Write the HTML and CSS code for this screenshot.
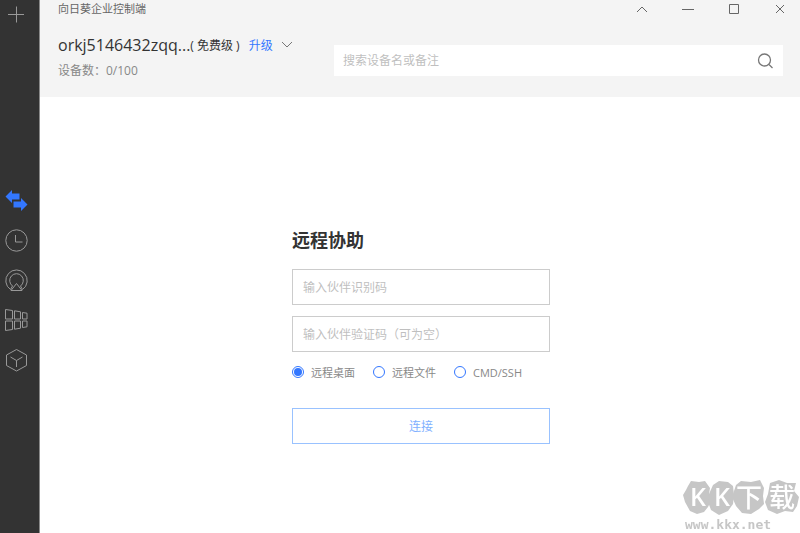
FILE: index.html
```html
<!DOCTYPE html>
<html lang="zh-CN">
<head>
    <meta charset="UTF-8">
    <title>向日葵企业控制端</title>
    <meta name="viewport" content="width=device-width, initial-scale=1.0">
    <link rel="stylesheet" href="styles.css">
</head>
<body>

    <!-- Sidebar -->
    <nav class="sidebar">
        <button class="icon-button" type="button" aria-label="添加">
            <svg width="24" height="24" viewBox="0 0 24 24"><path d="M4 12.500h16M12.500 4.500v16"/></svg>
        </button>
        <div class="sidebar-menu">
            <button class="icon-button active" type="button" aria-label="远程协助">
                <svg width="24" height="24" viewBox="0 0 24 24"><path d="M1.500 8.500L8 2v3.500h7.500v6H8V15z"/><path d="M23.500 16.500L17 10v3.500H9.500v6H17V23z"/></svg>
            </button>
            <button class="icon-button" type="button" aria-label="历史记录">
                <svg width="24" height="24" viewBox="0 0 24 24"><circle cx="12.500" cy="12.500" r="10.700"/><path d="M11.500 7v7h7"/></svg>
            </button>
            <button class="icon-button" type="button" aria-label="投屏">
                <svg width="24" height="24" viewBox="0 0 24 24"><path d="M6.500 21.500a10.700 10.700 0 1 1 12 0"/><path d="M8.500 18a6.800 6.800 0 1 1 8 0"/><path d="M6.500 21.500l2-3.500M18.500 21.500l-2-3.500"/><path d="M12.500 15.500L7 22.500h11z"/></svg>
            </button>
            <button class="icon-button" type="button" aria-label="设备墙">
                <svg width="24" height="24" viewBox="0 0 24 24"><path d="M1.500 1.500l7 1v8.500h-7zM10.500 2.800l6 1V11h-6zM18.500 4.500l4.500.7V11h-4.500zM1.500 13h7v8.500l-7 1zM10.500 13h6v7.200l-6 1zM18.500 13H23v5.800l-4.500.7z"/></svg>
            </button>
            <button class="icon-button" type="button" aria-label="应用">
                <svg width="24" height="24" viewBox="0 0 24 24"><path d="M12.500 1.500l10 5.500v10.500l-10 5.500-10-5.500V7z"/><path d="M6.500 9l6 3.500 6-3.500M12.500 12.500v6.500"/></svg>
            </button>
        </div>
    </nav>

    <div class="window">
        <header class="header">
            <div class="title-bar">
                <span class="title">向日葵企业控制端</span>
                <div class="window-controls">
                    <button type="button" aria-label="收起"><svg width="12" height="12" viewBox="0 0 12 12"><path d="M1 9l5-5 5 5"/></svg></button>
                    <button type="button" aria-label="最小化"><svg width="12" height="12" viewBox="0 0 12 12"><path d="M0 6.500h12"/></svg></button>
                    <button type="button" aria-label="最大化"><svg width="12" height="12" viewBox="0 0 12 12"><path d="M1.500 1.500h9v9h-9z"/></svg></button>
                    <button type="button" aria-label="关闭"><svg width="12" height="12" viewBox="0 0 12 12"><path d="M2 2l8 8M10 2l-8 8"/></svg></button>
                </div>
            </div>
            <div class="toolbar">
                <div class="account">
                    <div class="account-line">
                        <span class="account-name">orkj5146432zqq...</span>
                        <span class="account-level">( 免费级 )</span>
                        <a class="upgrade" href="#">升级</a>
                        <svg class="chevron" width="12" height="12" viewBox="0 0 12 12"><path d="M1 3l5 5 5-5"/></svg>
                    </div>
                    <div class="device-count">设备数：0/100</div>
                </div>
                <form class="search">
                    <input type="text" placeholder="搜索设备名或备注" aria-label="搜索设备名或备注">
                    <button type="submit" aria-label="搜索">
                        <svg width="18" height="18" viewBox="0 0 18 18"><circle cx="8.500" cy="8" r="6"/><path d="M13 12.500l3.500 3.500"/></svg>
                    </button>
                </form>
            </div>
        </header>

        <!-- Remote assistance form -->
        <main class="content">
            <form class="remote-form">
                <h1>远程协助</h1>
                <input class="text-field" type="text" placeholder="输入伙伴识别码" aria-label="伙伴识别码">
                <input class="text-field" type="text" placeholder="输入伙伴验证码（可为空）" aria-label="伙伴验证码">
                <div class="modes">
                    <label><input type="radio" name="mode" checked> 远程桌面</label>
                    <label><input type="radio" name="mode"> 远程文件</label>
                    <label><input type="radio" name="mode"> CMD/SSH</label>
                </div>
                <button class="connect" type="submit">连接</button>
            </form>
        </main>
    </div>

    <!-- Watermark -->
    <div class="watermark">
        <svg width="116" height="38" viewBox="0 0 116 38">
            <g class="stones">
                <path d="M5 7l3-5 8 1 6-1 5 7-1 6 3 5-4 8-4 5-7 2-7-3-5-9-2-7 3-5z"/>
                <path d="M30 6l6-4 9 1 5 4 1 9-1 9-5 7-9 4-8-5-3-8 1-8z"/>
                <path d="M53 6l5-4 10 1 9-2 4 8-1 8 1 8-5 5-8 5-9-1-6-7-4-9z"/>
                <path d="M87 4l9-3 8 3 9 0-2 8 5 6-2 9-4 6-8-1-8 3-9-4-3-8 3-8z"/>
            </g>
            <g class="letters">
                <text x="7" y="27">K</text>
                <text x="31" y="27">K</text>
                <text class="han" x="53" y="28">下</text>
                <text class="han" x="86" y="28">载</text>
            </g>
        </svg>
        <span class="site">www.kkx.net</span>
    </div>

</body>
</html>
```

FILE: styles.css
```css
* {
    box-sizing: border-box;
}
body {
    margin: 0;
    display: flex;
    min-height: 100vh;
    background-color: #ffffff;
    color: #333333;
    font-family: "Open Sans", "Noto Sans CJK SC", sans-serif;
    font-size: 12px;
}
button, input {
    font-family: inherit;
    font-size: inherit;
}
button {
    padding: 0;
    border: none;
    background: none;
    cursor: pointer;
}
svg {
    display: block;
    fill: none;
}
input::placeholder {
    color: #bfbfbf;
    opacity: 1;
}

/* Sidebar */
.sidebar {
    flex: 0 0 40px;
    padding: 2px 0 0 4px;
    background-color: #333333;
    border-right: 1px solid #8a8a8a;
}
.sidebar-menu {
    display: flex;
    flex-direction: column;
    gap: 16px;
    margin-top: 162px;
}
.icon-button {
    display: block;
    width: 24px;
    height: 24px;
    stroke: #999999;
}
.icon-button.active {
    stroke: none;
}
.icon-button.active svg {
    fill: #3377ff;
}

/* Header */
.window {
    flex: 1;
    min-width: 0;
}
.header {
    padding: 0 17px 17px 18px;
    background-color: #f4f4f4;
}
.title-bar {
    display: flex;
    justify-content: space-between;
    align-items: center;
    height: 18px;
}
.title {
    font-size: 11px;
    line-height: 16px;
    color: #666666;
}
.window-controls {
    display: flex;
    gap: 34px;
    margin-right: -3px;
}
.window-controls button {
    stroke: #666666;
}
.toolbar {
    display: flex;
    align-items: flex-start;
    padding-top: 15px;
}
.account {
    flex: 0 0 276px;
}
.account-line {
    display: flex;
    align-items: center;
    height: 23px;
    white-space: nowrap;
}
.account-name {
    font-size: 16px;
}
.upgrade {
    margin: 0 8px 0 9px;
    color: #3377ff;
    text-decoration: none;
}
.chevron {
    stroke: #777777;
}
.device-count {
    margin-top: 6px;
    line-height: 18px;
    color: #888888;
}
.search {
    flex: 1;
    display: flex;
    align-items: center;
    height: 31px;
    margin-top: 12px;
    padding: 0 9px;
    background-color: #ffffff;
}
.search input {
    flex: 1;
    min-width: 0;
    padding: 0;
    border: none;
    outline: none;
    background: none;
}
.search button {
    stroke: #777777;
    stroke-width: 1.3;
}

/* Remote assistance form */
.content {
    display: flex;
    justify-content: center;
    padding: 130px 20px 40px 22px;
}
.remote-form {
    width: 258px;
}
h1 {
    margin: 0 0 16px;
    font-size: 18px;
    line-height: 26px;
    font-weight: bold;
}
.text-field {
    display: block;
    width: 100%;
    height: 36px;
    margin-bottom: 11px;
    padding: 0 10px;
    border: 1px solid #cccccc;
    outline: none;
}
.modes {
    display: flex;
    gap: 18px;
    padding-top: 1px;
    font-size: 11px;
    color: #888888;
}
.modes label {
    display: flex;
    align-items: center;
    gap: 7px;
    height: 16px;
    white-space: nowrap;
}
.modes input {
    appearance: none;
    width: 12px;
    height: 12px;
    margin: 0;
    border: 1px solid #3377ff;
    border-radius: 50%;
}
.modes input:checked {
    padding: 1px;
    background: #3377ff content-box;
}
.connect {
    width: 100%;
    height: 36px;
    margin-top: 28px;
    border: 1px solid #99c2ff;
    color: #80b0ff;
}

/* Watermark */
.watermark {
    position: fixed;
    right: 1px;
    bottom: 0;
    color: #c6c6c6;
    pointer-events: none;
}
.stones {
    fill: #c6c6c6;
}
.letters {
    fill: #ffffff;
    font-family: "Open Sans", "Noto Sans CJK SC", sans-serif;
    font-size: 25px;
    font-weight: 600;
}
.letters .han {
    font-size: 26px;
    font-weight: 500;
}
.site {
    display: block;
    padding-left: 2px;
    font-family: "DejaVu Sans Mono", monospace;
    font-size: 13px;
    font-weight: bold;
    line-height: 16px;
}
```
